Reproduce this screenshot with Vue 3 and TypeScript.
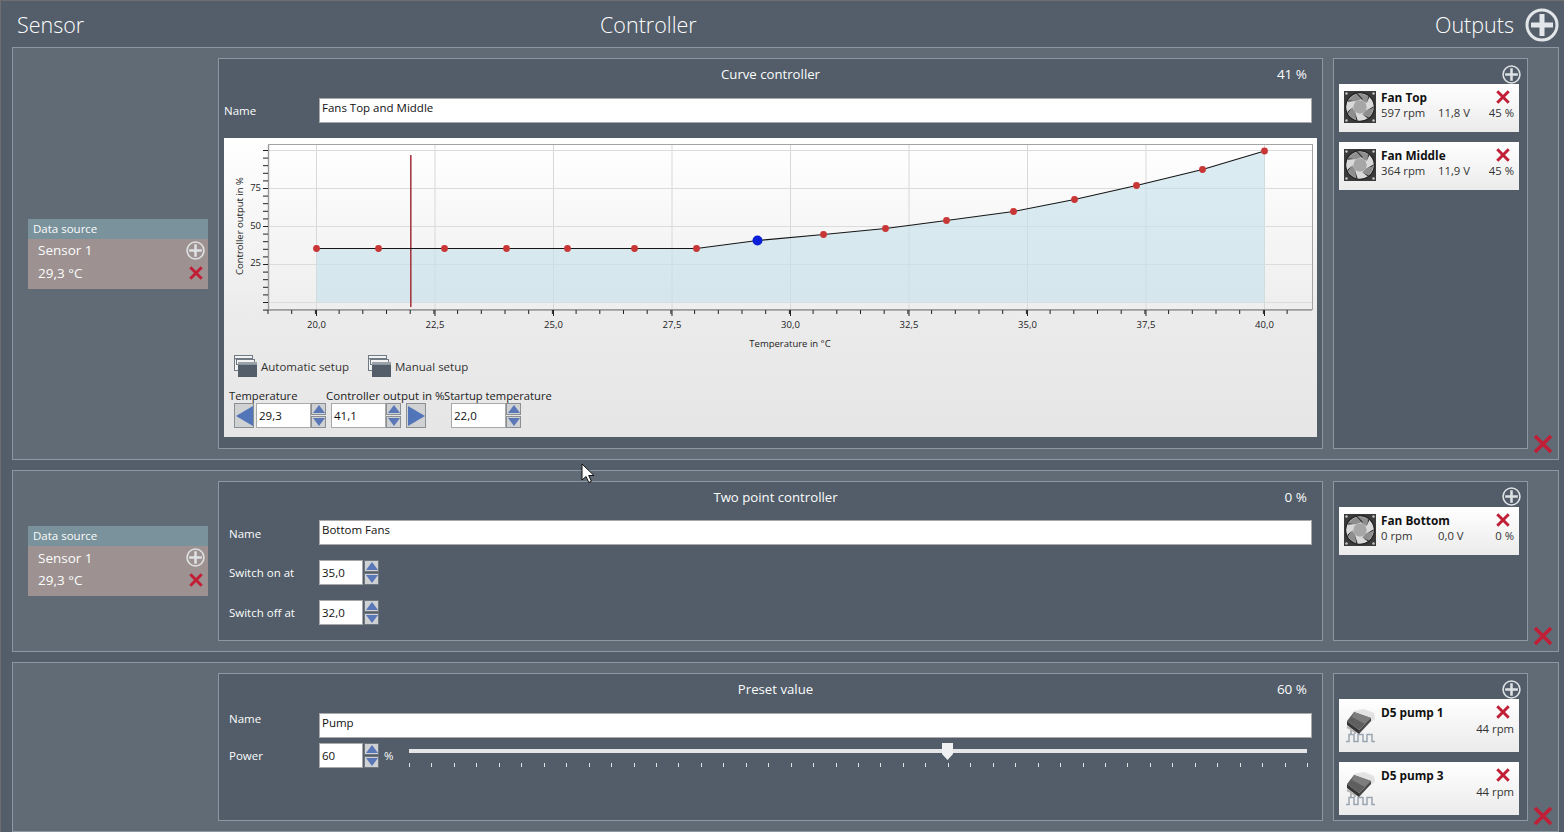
<script setup lang="ts">
const pts: [number, number][] = [[316,248],[378,248],[444,248],[506,248],[567,248],[634,248],[696,248],[757,240],[823,234],[885,228],[946,220],[1013,211],[1074,199],[1136,185],[1202,169],[1264,150.5]]
const ox = 224, oy = 138
const p = pts.map(([x, y]) => [x - ox + 0.5, y - oy + 0.5] as [number, number])
const line = p.map(a => a.join(',')).join(' ')
const area = `${p[0][0]},${302.5 - oy} ${line} ${p[p.length - 1][0]},${302.5 - oy}`
const xGrid = [316.5, 435, 553.5, 672, 790.5, 909, 1027.5, 1146, 1264.5].map(v => v - ox)
const xLabels = ['20,0', '22,5', '25,0', '27,5', '30,0', '32,5', '35,0', '37,5', '40,0']
const yGrid = [150.5, 188.5, 226.5, 264.5, 302.5].map(v => v - oy)
const yLabels = [{ t: '75', y: 191 - oy }, { t: '50', y: 229 - oy }, { t: '25', y: 266 - oy }]
const xTicks: number[] = []
for (let i = 0; i <= 43; i++) xTicks.push(268 - ox + i * 23.7)
const yTicks: number[] = []
for (let i = 0; i < 22; i++) yTicks.push(150.5 - oy + i * 7.6)
const sliderTicks: number[] = []
for (let i = 0; i <= 40; i++) sliderTicks.push(i * 2.5)
const blades = [0, 1, 2, 3, 4, 5, 6].map(i => ({ a: (i * 360) / 7 + 12, c: i % 2 ? '#d9d9d9' : '#8e8e8e' }))
const corners = [[2.5, 2.5], [29.5, 2.5], [2.5, 29.5], [29.5, 29.5]]
const pumpCards = [{ name: 'D5 pump 1' }, { name: 'D5 pump 3' }]
const fansTop = [
  { name: 'Fan Top', rpm: '597 rpm', v: '11,8 V', pct: '45 %' },
  { name: 'Fan Middle', rpm: '364 rpm', v: '11,9 V', pct: '45 %' },
]
const fansBottom = [{ name: 'Fan Bottom', rpm: '0 rpm', v: '0,0 V', pct: '0 %' }]
</script>

<template>
  <div class="app">
    <header class="head">
      <span class="h-sensor">Sensor</span>
      <span class="h-ctrl">Controller</span>
      <span class="h-out">Outputs</span>
      <svg class="big-plus" viewBox="0 0 34 34"><circle cx="17" cy="17" r="15" fill="none" stroke="#e3e6e8" stroke-width="3"/><path d="M17 6v22M6 17h22" stroke="#e3e6e8" stroke-width="5"/></svg>
    </header>

    <section class="row r1">
      <div class="sensor-col">
        <div class="source">
          <div class="src-head">Data source</div>
          <div class="src-body">
            <div class="src-line"><span>Sensor 1</span><svg class="plus-sm" viewBox="0 0 18 18"><circle cx="9" cy="9" r="8" fill="none" stroke="#dfe2e4" stroke-width="1.5"/><path d="M9 3v12M3 9h12" stroke="#dfe2e4" stroke-width="2.4"/></svg></div>
            <div class="src-line"><span>29,3 °C</span><svg class="x-sm" viewBox="0 0 14 14"><path d="M2 2l10 10M12 2L2 12" stroke="#c01f35" stroke-width="2.6"/></svg></div>
          </div>
        </div>
      </div>
      <div class="panel">
        <div class="title"><span>Curve controller</span><span class="pct">41 %</span></div>
        <div class="name-row nr-curve"><label class="lbl">Name</label><div class="text-in">Fans Top and Middle</div></div>
        <div class="chart">
          <svg class="plot" width="1093" height="212" viewBox="0 0 1093 212">
            <defs><linearGradient id="pg" x1="0" y1="0" x2="0" y2="1"><stop offset="0" stop-color="#ffffff"/><stop offset="1" stop-color="#eeeeee"/></linearGradient></defs>
            <rect x="44.5" y="6.5" width="1044" height="165" fill="url(#pg)" stroke="#a3a3a3"/>
            <line v-for="x in xGrid" :key="'gx'+x" :x1="x" :x2="x" y1="7" y2="171" stroke="#d8d8d8"/>
            <line v-for="y in yGrid" :key="'gy'+y" x1="45" x2="1088" :y1="y" :y2="y" stroke="#dcdcdc"/>
            <polygon :points="area" fill="#c5e0ec" fill-opacity=".62"/>
            <line x1="186.8" x2="186.8" y1="17" y2="169" stroke="#a83a42" stroke-width="1.6"/>
            <polyline :points="line" fill="none" stroke="#151515" stroke-width="1.1"/>
            <circle v-for="(a, i) in p" :key="'pt'+i" :cx="a[0]" :cy="a[1]" :r="i === 7 ? 5 : 3.4" :fill="i === 7 ? '#0c1fd8' : '#c93636'"/>
            <line x1="44" x2="1088" y1="172" y2="172" stroke="#9b9b9b" stroke-width="1.4"/>
            <line x1="44.5" x2="44.5" y1="7" y2="172" stroke="#9b9b9b" stroke-width="1.4"/>
            <line v-for="x in xTicks" :key="'tx'+x" :x1="x" :x2="x" y1="172" :y2="176" stroke="#222"/>
            <line v-for="x in xGrid" :key="'tm'+x" :x1="x" :x2="x" y1="172" y2="178" stroke="#222"/>
            <line v-for="y in yTicks" :key="'ty'+y" x1="39" x2="44" :y1="y" :y2="y" stroke="#222"/>
            <text v-for="(t, i) in xLabels" :key="t" :x="xGrid[i]" y="190" text-anchor="middle" class="ax">{{ t }}</text>
            <text v-for="l in yLabels" :key="l.t" x="37" :y="l.y" text-anchor="end" class="ax">{{ l.t }}</text>
            <text x="566" y="209" text-anchor="middle" class="ax">Temperature in °C</text>
            <text transform="translate(18.5 88) rotate(-90)" text-anchor="middle" class="ax">Controller output in %</text>
          </svg>
          <div class="setup">
            <div v-for="s in ['Automatic setup', 'Manual setup']" :key="s" class="sbtn">
              <svg class="win" viewBox="0 0 23 22"><rect x="0.5" y="0.5" width="18" height="15" fill="#f3f3f3" stroke="#6f7a85"/><rect x="1" y="3" width="17" height="1.4" fill="#6f7a85"/><rect x="2.5" y="4.5" width="18" height="5" fill="#f3f3f3" stroke="#6f7a85"/><rect x="4" y="7" width="19" height="15" fill="#f3f3f3"/><rect x="4" y="7" width="19" height="2.5" fill="#9aa2aa"/><rect x="4" y="9.5" width="19" height="12.5" fill="#535e6a"/></svg>
              <span>{{ s }}</span>
            </div>
          </div>
          <div class="fields">
            <div class="fg g1">
              <div class="fl">Temperature</div>
              <div class="fr">
                <button class="arrow"><i class="al"></i></button>
                <div class="num w54">29,3</div>
                <div class="spin"><b><i class="up"></i></b><b><i class="dn"></i></b></div>
              </div>
            </div>
            <div class="fg g2">
              <div class="fl">Controller output in %</div>
              <div class="fr">
                <div class="num w54">41,1</div>
                <div class="spin"><b><i class="up"></i></b><b><i class="dn"></i></b></div>
                <button class="arrow a-r"><i class="ar"></i></button>
              </div>
            </div>
            <div class="fg g3">
              <div class="fl">Startup temperature</div>
              <div class="fr">
                <div class="num w54">22,0</div>
                <div class="spin"><b><i class="up"></i></b><b><i class="dn"></i></b></div>
              </div>
            </div>
          </div>
        </div>
      </div>
      <div class="outs">
        <svg class="plus-sm out-plus" viewBox="0 0 18 18"><circle cx="9" cy="9" r="8" fill="none" stroke="#dfe2e4" stroke-width="1.5"/><path d="M9 3v12M3 9h12" stroke="#dfe2e4" stroke-width="2.4"/></svg>
        <div v-for="f in fansTop" :key="f.name" class="card">
          <svg class="fan" viewBox="0 0 32 32"><rect width="32" height="32" fill="#3a3a3a"/><circle v-for="c in corners" :key="c.join()" :cx="c[0]" :cy="c[1]" r="1.2" fill="#c9c9c9"/><circle cx="16" cy="16" r="15" fill="#262626"/><circle cx="16" cy="16" r="13.6" fill="#f0f0f0"/><g v-for="b in blades" :key="b.a" :transform="`rotate(${b.a} 16 16)`"><path d="M16 9L11.5 3.2Q16.5 1.8 21.5 3.6L22 11Z" :fill="b.c"/><path d="M22 11L21.5 3.6L23 4.5L23.2 12Z" fill="#333"/></g><circle cx="16" cy="16" r="6.8" fill="#a6a6a6"/></svg>
          <div class="c-main">
            <div class="c-top"><strong>{{ f.name }}</strong><svg class="x-sm" viewBox="0 0 14 14"><path d="M2 2l10 10M12 2L2 12" stroke="#c01f35" stroke-width="2.6"/></svg></div>
            <div class="c-vals"><span>{{ f.rpm }}</span><span>{{ f.v }}</span><span class="end">{{ f.pct }}</span></div>
          </div>
        </div>
      </div>
      <div class="del-col"><svg class="x-big" viewBox="0 0 20 20"><path d="M2 2l16 16M18 2L2 18" stroke="#c01f35" stroke-width="3.6"/></svg></div>
    </section>

    <section class="row r2">
      <div class="sensor-col">
        <div class="source">
          <div class="src-head">Data source</div>
          <div class="src-body">
            <div class="src-line"><span>Sensor 1</span><svg class="plus-sm" viewBox="0 0 18 18"><circle cx="9" cy="9" r="8" fill="none" stroke="#dfe2e4" stroke-width="1.5"/><path d="M9 3v12M3 9h12" stroke="#dfe2e4" stroke-width="2.4"/></svg></div>
            <div class="src-line"><span>29,3 °C</span><svg class="x-sm" viewBox="0 0 14 14"><path d="M2 2l10 10M12 2L2 12" stroke="#c01f35" stroke-width="2.6"/></svg></div>
          </div>
        </div>
      </div>
      <div class="panel">
        <div class="title shifted"><span>Two point controller</span><span class="pct">0 %</span></div>
        <div class="name-row nr-two"><label class="lbl">Name</label><div class="text-in">Bottom Fans</div></div>
        <div class="sw-row"><label class="lbl">Switch on at</label><div class="num w43">35,0</div><div class="spin"><b><i class="up"></i></b><b><i class="dn"></i></b></div></div>
        <div class="sw-row"><label class="lbl">Switch off at</label><div class="num w43">32,0</div><div class="spin"><b><i class="up"></i></b><b><i class="dn"></i></b></div></div>
      </div>
      <div class="outs">
        <svg class="plus-sm out-plus" viewBox="0 0 18 18"><circle cx="9" cy="9" r="8" fill="none" stroke="#dfe2e4" stroke-width="1.5"/><path d="M9 3v12M3 9h12" stroke="#dfe2e4" stroke-width="2.4"/></svg>
        <div v-for="f in fansBottom" :key="f.name" class="card">
          <svg class="fan" viewBox="0 0 32 32"><rect width="32" height="32" fill="#3a3a3a"/><circle v-for="c in corners" :key="c.join()" :cx="c[0]" :cy="c[1]" r="1.2" fill="#c9c9c9"/><circle cx="16" cy="16" r="15" fill="#262626"/><circle cx="16" cy="16" r="13.6" fill="#f0f0f0"/><g v-for="b in blades" :key="b.a" :transform="`rotate(${b.a} 16 16)`"><path d="M16 9L11.5 3.2Q16.5 1.8 21.5 3.6L22 11Z" :fill="b.c"/><path d="M22 11L21.5 3.6L23 4.5L23.2 12Z" fill="#333"/></g><circle cx="16" cy="16" r="6.8" fill="#a6a6a6"/></svg>
          <div class="c-main">
            <div class="c-top"><strong>{{ f.name }}</strong><svg class="x-sm" viewBox="0 0 14 14"><path d="M2 2l10 10M12 2L2 12" stroke="#c01f35" stroke-width="2.6"/></svg></div>
            <div class="c-vals"><span>{{ f.rpm }}</span><span>{{ f.v }}</span><span class="end">{{ f.pct }}</span></div>
          </div>
        </div>
      </div>
      <div class="del-col"><svg class="x-big" viewBox="0 0 20 20"><path d="M2 2l16 16M18 2L2 18" stroke="#c01f35" stroke-width="3.6"/></svg></div>
    </section>

    <section class="row r3">
      <div class="sensor-col"></div>
      <div class="panel">
        <div class="title shifted"><span>Preset value</span><span class="pct">60 %</span></div>
        <div class="name-row nr-pre"><label class="lbl">Name</label><div class="text-in">Pump</div></div>
        <div class="power">
          <label class="lbl">Power</label>
          <div class="num w43">60</div>
          <div class="spin"><b><i class="up"></i></b><b><i class="dn"></i></b></div>
          <span class="pc">%</span>
          <div class="slider">
            <div class="track"></div>
            <div class="thumb"></div>
            <div class="ticks"><span v-for="t in sliderTicks" :key="t" class="tick" :style="{ left: t + '%' }"></span></div>
          </div>
        </div>
      </div>
      <div class="outs">
        <svg class="plus-sm out-plus" viewBox="0 0 18 18"><circle cx="9" cy="9" r="8" fill="none" stroke="#dfe2e4" stroke-width="1.5"/><path d="M9 3v12M3 9h12" stroke="#dfe2e4" stroke-width="2.4"/></svg>
        <div v-for="c in pumpCards" :key="c.name" class="card pump">
          <svg class="chip" viewBox="0 0 32 40">
            <path d="M9 5L20 3l10 4 1 6-8 6z" fill="#d8d8d8" opacity=".7"/>
            <path d="M3 21l4 2v5M8 24l3 2v2M13 26l2 1v1" fill="none" stroke="#b5b5b5" stroke-width="2"/>
            <path d="M3 15l7-9 17 6-12 12z" fill="#5f5f5f"/>
            <path d="M10 6l17 6-6 6-13-7z" fill="#7d7d7d"/>
            <path d="M3 15l12 9v4L3 19z" fill="#353535"/>
            <path d="M15 24l12-12v3L15 28z" fill="#484848"/>
            <path d="M2 35.5h3V28.500h5v7h4v-7h5v7h4v-7h5v7h3" fill="none" stroke="#9aa7b2" stroke-width="1.5"/>
          </svg>
          <div class="c-main">
            <div class="c-top"><strong>{{ c.name }}</strong><svg class="x-sm" viewBox="0 0 14 14"><path d="M2 2l10 10M12 2L2 12" stroke="#c01f35" stroke-width="2.6"/></svg></div>
            <div class="rpm-only">44 rpm</div>
          </div>
        </div>
      </div>
      <div class="del-col"><svg class="x-big" viewBox="0 0 20 20"><path d="M2 2l16 16M18 2L2 18" stroke="#c01f35" stroke-width="3.6"/></svg></div>
    </section>

    <svg class="cursor" viewBox="0 0 14 21"><path d="M1 1v16l4-3.500 2.800 6 2.600-1.200-2.700-5.800H13z" fill="#fff" stroke="#111" stroke-width="1"/></svg>
  </div>
</template>

<style>
html, body { margin: 0; background: #535e6a; }
</style>

<style scoped>
.app {
  width: 1564px; height: 832px; box-sizing: border-box; overflow: hidden; position: relative;
  background: #535e6a; color: #fbfcfc;
  font-family: "Open Sans", "Noto Sans", sans-serif; font-size: 11.5px;
  border-top: 1px solid #6e6e6e; border-left: 1px solid #6e6e6e;
  padding-left: 11px;
  display: flex; flex-direction: column;
}
.head { height: 46px; flex: none; position: relative; font-size: 21.5px; font-weight: 300; color: #fff; }
.head span { position: absolute; top: 8px; line-height: 32px; }
.h-sensor { left: 5px; }
.h-ctrl { left: 588px; }
.h-out { right: 50px; }
.big-plus { position: absolute; right: 5px; top: 7px; width: 34px; height: 34px; }
.row {
  width: 1547px; box-sizing: border-box; flex: none;
  background: #606b75; border: 1px solid #8c97a1;
  display: flex; padding: 10px 0;
}
.r1 { height: 413px; margin-bottom: 10px; }
.r2 { height: 182px; margin-bottom: 10px; }
.r3 { height: 170px; }
.sensor-col { width: 205px; flex: none; display: flex; align-items: center; padding-left: 15px; box-sizing: border-box; }
.source { width: 180px; }
.src-head { height: 20px; background: #7a929b; line-height: 20px; padding-left: 5px; font-size: 11.5px; }
.src-body { height: 50px; background: #9d9291; padding: 0 3px 0 10px; box-sizing: border-box; }
.src-line { display: flex; justify-content: space-between; align-items: center; height: 22px; font-size: 13.5px; }
.src-line:first-child { height: 23px; }
.plus-sm { width: 19px; height: 19px; display: block; }
.x-sm { width: 16px; height: 16px; display: block; margin-right: 1px; }
.panel {
  width: 1105px; flex: none; box-sizing: border-box; background: #525d69;
  border: 1px solid #8c97a1; padding: 0 5px; display: flex; flex-direction: column; position: relative;
}
.title { position: relative; text-align: center; font-size: 13.2px; line-height: 18px; margin-top: 6px; }
.title.shifted { padding-left: 10px; }
.pct { position: absolute; right: 10px; top: 0; font-size: 13.5px; }
.name-row { display: flex; align-items: center; }
.lbl { width: 95px; flex: none; font-size: 11.5px; }
.nr-curve { margin-top: 15px; }
.nr-two { margin-top: 14px; padding-left: 5px; }
.nr-two .lbl { width: 90px; padding-top: 2px; }
.nr-pre { margin-top: 15px; padding-left: 5px; align-items: flex-start; }
.nr-pre .lbl { width: 90px; line-height: 11px; }
.text-in {
  width: 993px; height: 25px; box-sizing: border-box; background: #fff; border: 1px solid #a9a9a9;
  color: #111; padding: 0 2px; line-height: 17px; font-size: 11.5px;
}
.chart {
  width: 1093px; height: 299px; margin-top: 15px; background: linear-gradient(#fff, #ebebeb 60%, #e6e6e6);
  color: #222; box-sizing: border-box;
}
.plot { display: block; }
.ax { font-family: "Open Sans", sans-serif; font-size: 9.5px; fill: #222; }
.setup { display: flex; height: 24px; margin-top: 4px; padding-left: 10px; color: #333; font-size: 11.5px; }
.sbtn { display: flex; align-items: center; gap: 4px; margin-right: 19px; }
.win { width: 23px; height: 22px; }
.fields { display: flex; padding-left: 5px; margin-top: 10px; font-size: 11.2px; }
.fl { height: 15px; line-height: 15px; white-space: nowrap; }
.g2 .fl { font-size: 11.5px; }
.fr { display: flex; align-items: center; height: 25px; }
.g1 { width: 97px; }
.g1 .fr { padding-left: 5px; }
.g2 { width: 118px; }
.g2 .fr { padding-left: 5px; }
.g3 .fr { padding-left: 7px; }
.num {
  height: 25px; box-sizing: border-box; background: #fff; border: 1px solid #a9a9a9;
  color: #111; padding-left: 2px; line-height: 24px; font-size: 11.5px; flex: none;
}
.w54 { width: 55px; }
.w43 { width: 44px; margin-right: 1px; }
.spin { display: flex; flex-direction: column; width: 15px; height: 25px; flex: none; gap: 1px; }
.spin b { flex: 1; background: #cfd1d3; border: 1px solid #8a8f94; box-sizing: border-box; display: flex; align-items: center; justify-content: center; }
.sw-row .spin b, .power .spin b { border-color: #6e7780; }
.up { width: 0; height: 0; border-left: 6px solid transparent; border-right: 6px solid transparent; border-bottom: 8px solid #5a78b8; }
.dn { width: 0; height: 0; border-left: 6px solid transparent; border-right: 6px solid transparent; border-top: 8px solid #5a78b8; }
.arrow {
  width: 20px; height: 25px; padding: 0; margin-right: 2px; background: #cfd1d3; border: 1px solid #8a8f94;
  display: flex; align-items: center; justify-content: center; box-sizing: border-box; flex: none;
}
.a-r { margin: 0 0 0 5px; }
.al { width: 0; height: 0; border-top: 10px solid transparent; border-bottom: 10px solid transparent; border-right: 17px solid #5274b8; }
.ar { width: 0; height: 0; border-top: 10px solid transparent; border-bottom: 10px solid transparent; border-left: 17px solid #5274b8; }
.sw-row { display: flex; align-items: center; padding-left: 5px; height: 25px; margin-top: 15px; }
.sw-row .lbl { width: 90px; }
.power { display: flex; align-items: center; padding-left: 5px; height: 25px; margin-top: 5px; }
.power .lbl { width: 90px; }
.pc { margin-left: 5px; width: 25px; font-size: 11.5px; }
.slider { position: relative; width: 898px; height: 25px; }
.track { position: absolute; left: 0; right: 0; top: 6px; height: 4px; background: #e4e6e8; }
.thumb { position: absolute; left: 533px; top: 0; width: 11px; height: 17px; background: #eef0f1; clip-path: polygon(0 0, 100% 0, 100% 65%, 50% 100%, 0 65%); }
.ticks { position: absolute; left: 0; right: 0; top: 20px; height: 4px; }
.tick { position: absolute; width: 1px; height: 4px; background: #dfe2e4; }
.outs {
  margin-left: 10px; width: 195px; flex: none; box-sizing: border-box; background: #525d69; border: 1px solid #8c97a1;
  padding: 25px 8px 0 5px; display: flex; flex-direction: column; gap: 10px; position: relative;
}
.out-plus { position: absolute; top: 6px; right: 6px; }
.r2 .out-plus { top: 5px; }
.card {
  height: 48px; box-sizing: border-box; background: linear-gradient(#fff, #ebebeb); flex: none;
  display: flex; align-items: flex-start; padding: 7px 5px 0 5px; color: #222; font-size: 11.3px;
}
.pump { height: 53px; }
.fan { width: 32px; height: 32px; flex: none; margin-right: 5px; }
.chip { width: 32px; height: 40px; flex: none; margin-right: 5px; }
.c-main { flex: 1; min-width: 0; margin-top: -1px; }
.c-top { display: flex; justify-content: space-between; align-items: center; height: 14px; font-size: 11.8px; }
.c-top strong { font-weight: 700; color: #111; }
.c-top .x-sm { margin-right: 3px; margin-top: -1px; }
.c-vals { display: grid; grid-template-columns: 57px 50px 1fr; margin-top: 1px; line-height: 16px; color: #333; }
.end { text-align: right; }
.rpm-only { text-align: right; margin-top: 2px; line-height: 16px; color: #333; }
.del-col { flex: 1; position: relative; }
.x-big { position: absolute; right: 5px; bottom: -5px; width: 20px; height: 20px; }
.cursor { position: absolute; left: 580px; top: 462px; width: 14px; height: 21px; }
</style>
